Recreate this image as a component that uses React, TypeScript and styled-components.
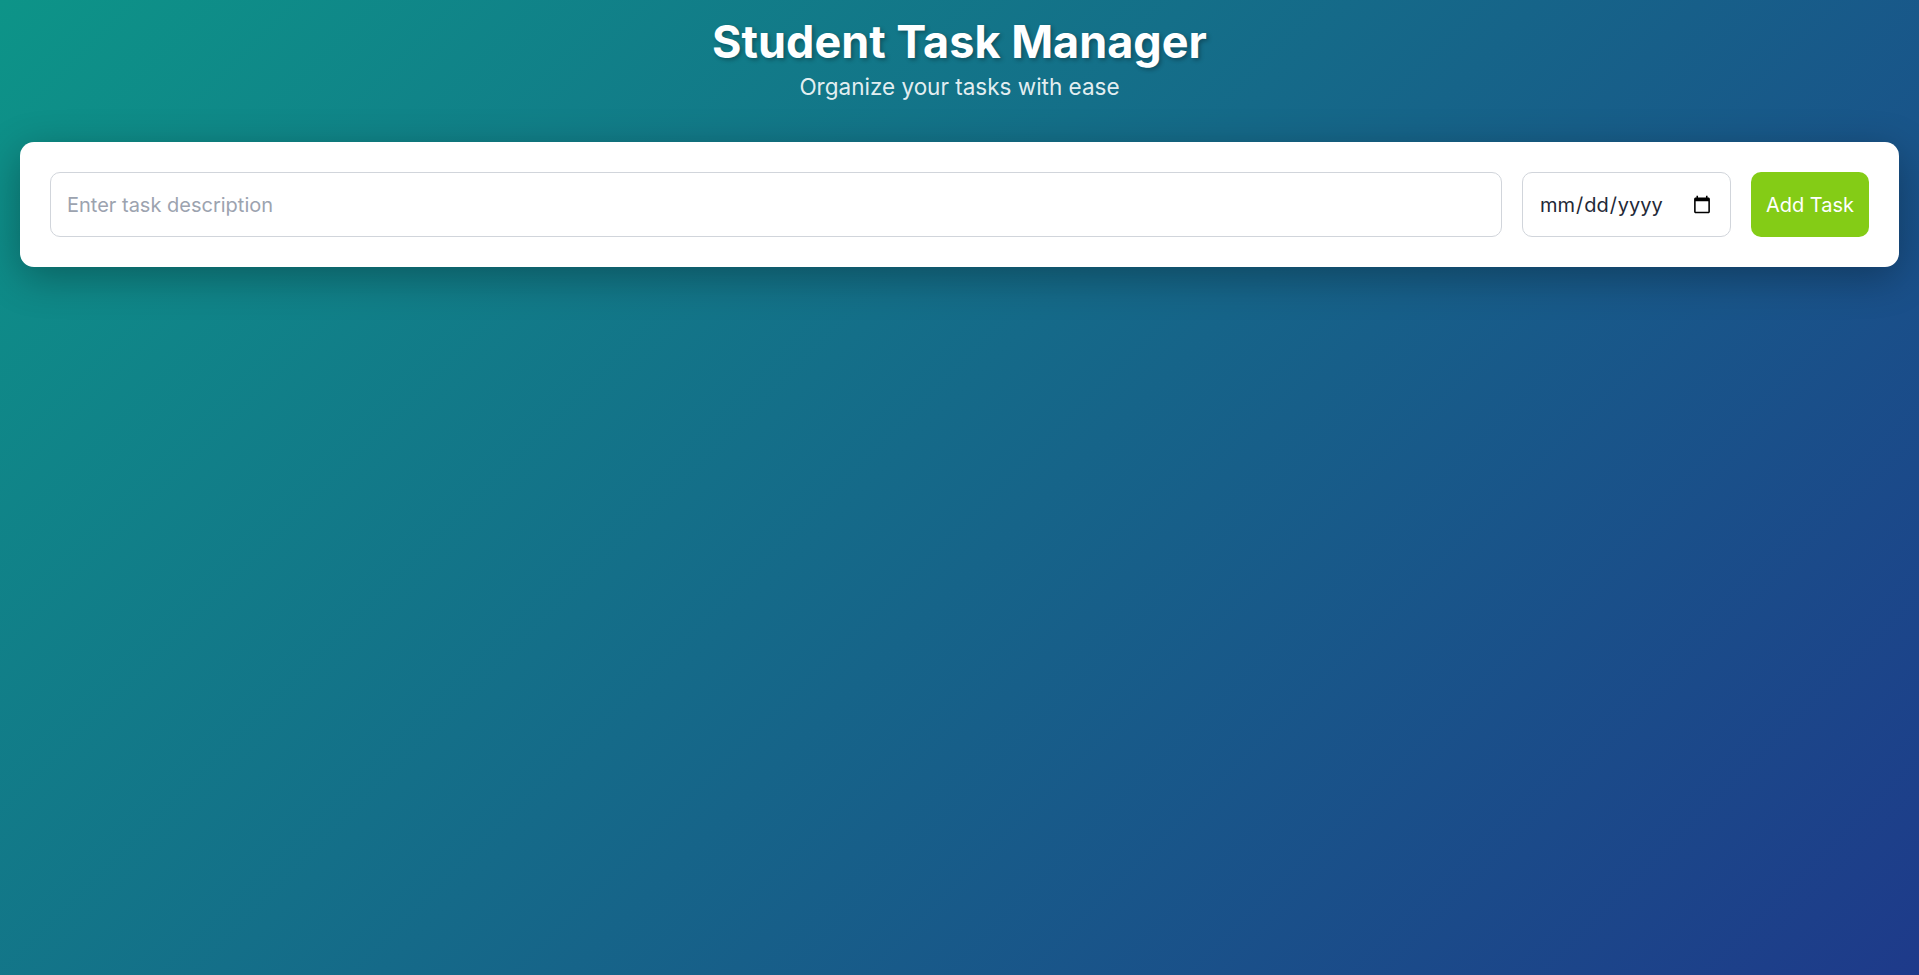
import React, { useState } from "react";
import styled, { createGlobalStyle } from "styled-components";

const GlobalStyle = createGlobalStyle`
  * { box-sizing: border-box; }
  html, body { margin: 0; padding: 0; }
  body {
    font-family: Inter, "Noto Sans", Arial, sans-serif;
    min-height: 100vh;
    background: linear-gradient(135deg, #0d9488 0%, #1e3a8a 100%);
    background-attachment: fixed;
  }
`;

const Page = styled.div`
  min-height: 100vh;
  padding: 14px 20px 20px;
  display: flex;
  flex-direction: column;
`;

const Header = styled.header`
  display: flex;
  flex-direction: column;
  align-items: center;
  margin-bottom: 42px;
`;

const Title = styled.h1`
  margin: 0 0 4px;
  font-size: 45px;
  font-weight: 700;
  color: #ffffff;
  text-shadow: 2px 2px 4px rgba(0, 0, 0, 0.3);
`;

const Subtitle = styled.p`
  margin: 0;
  font-size: 22.5px;
  font-weight: 400;
  color: rgba(255, 255, 255, 0.9);
`;

const Card = styled.form`
  background: #ffffff;
  border-radius: 14px;
  padding: 30px;
  display: flex;
  gap: 20px;
  align-items: stretch;
  box-shadow: 0 10px 40px rgba(0, 0, 0, 0.3);
`;

const Field = styled.input`
  height: 65px;
  padding: 0 16px;
  border: 1px solid #d1d5db;
  border-radius: 10px;
  font-family: Inter, "Noto Sans", Arial, sans-serif;
  font-size: 20px;
  color: #1f2937;
  background: #ffffff;
  outline: none;
  &::placeholder {
    color: #9ca3af;
  }
`;

const TaskInput = styled(Field)`
  flex: 1;
  min-width: 0;
`;

const DateInput = styled(Field)`
  width: 209px;
  flex: none;
`;

const AddButton = styled.button`
  height: 65px;
  padding: 0 15px;
  border: none;
  border-radius: 10px;
  background: #84cc16;
  color: #ffffff;
  font-family: Inter, "Noto Sans", Arial, sans-serif;
  font-size: 20px;
  cursor: pointer;
  flex: none;
`;

export default function App() {
  const [task, setTask] = useState("");
  const [date, setDate] = useState("");
  return (
    <>
      <GlobalStyle />
      <Page>
        <Header>
          <Title>Student Task Manager</Title>
          <Subtitle>Organize your tasks with ease</Subtitle>
        </Header>
        <Card onSubmit={(e) => e.preventDefault()}>
          <TaskInput
            type="text"
            placeholder="Enter task description"
            value={task}
            onChange={(e) => setTask(e.target.value)}
          />
          <DateInput type="date" value={date} onChange={(e) => setDate(e.target.value)} />
          <AddButton type="submit">Add Task</AddButton>
        </Card>
      </Page>
    </>
  );
}
